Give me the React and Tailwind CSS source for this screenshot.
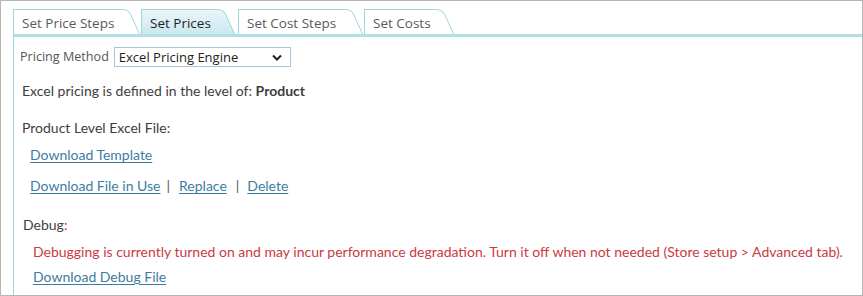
import React from "react";

const TEAL = "#9fd4de";
const UI_FONT = '"Open Sans", "Noto Sans", sans-serif';

function Wing({ active }) {
  return (
    <svg width="20" height="25" viewBox="0 0 20 25" className="block shrink-0">
      {active && (
        <defs>
          <linearGradient id="tabg" x1="0" y1="0" x2="0" y2="1">
            <stop offset="0" stopColor="#e9f6f9" />
            <stop offset="1" stopColor="#cbe8f0" />
          </linearGradient>
        </defs>
      )}
      <path
        d="M0 0.5 L2 0.5 Q8 0.5 10.5 5 L19.5 25 L0 25 Z"
        fill={active ? "url(#tabg)" : "#ffffff"}
        stroke="none"
      />
      <path
        d="M0 0.5 L2 0.5 Q8 0.5 10.5 5 L19.5 25"
        fill="none"
        stroke={TEAL}
        strokeWidth="1"
      />
    </svg>
  );
}

function Tab({ label, width, active }) {
  return (
    <div className="flex items-end">
      <div
        className={
          "h-[25px] border-l border-t border-[#9fd4de] flex items-center pl-[8px] pt-[2px] whitespace-nowrap " +
          (active
            ? "bg-gradient-to-b from-[#e9f6f9] to-[#cbe8f0] text-[#1f1f1f]"
            : "bg-white text-[#5a5a5a]")
        }
        style={{ width }}
      >
        {label}
      </div>
      <Wing active={active} />
    </div>
  );
}

function Link({ children }) {
  return (
    <a href="#" className="text-[#3d7ca2] underline underline-offset-[2px] decoration-[#3d7ca2]">
      {children}
    </a>
  );
}

export default function App() {
  return (
    <div className="w-[863px] h-[296px] bg-white border border-[#b5b5b5] flex flex-col">
      {/* tabs */}
      <div
        className="flex items-end pt-[8px] ml-[12px] gap-[1px] text-[13.5px]"
        style={{ fontFamily: UI_FONT }}
      >
        <Tab label="Set Price Steps" width={107} />
        <Tab label="Set Prices" width={74} active />
        <div className="w-[1px]" />
        <Tab label="Set Cost Steps" width={105} />
        <Tab label="Set Costs" width={70} />
      </div>
      {/* content */}
      <div
        className="flex-1 ml-[12px] border-l border-t-[3px] border-l-[#9fd4de] border-t-[#b2e0e7] text-[14px] text-[#3e3e3e] leading-[20px]"
        style={{ fontFamily: 'Lato, "Open Sans", sans-serif' }}
      >
        <div className="pt-[10px] pl-[6px] flex items-center">
          <span
            className="text-[12.6px] text-[#555555] mr-[5px]"
            style={{ fontFamily: UI_FONT }}
          >
            Pricing Method
          </span>
          <div
            className="w-[177px] h-[20px] border border-[#a9c4d6] flex items-center justify-between pl-[4px] pr-[4px] text-[13px] text-[#222222]"
            style={{ fontFamily: UI_FONT }}
          >
            <span>Excel Pricing Engine</span>
            <svg width="10" height="7" viewBox="0 0 10 7" className="mr-[4px]">
              <polyline points="1,1.5 5,5.5 9,1.5" fill="none" stroke="#222" strokeWidth="2" />
            </svg>
          </div>
        </div>

        <div className="mt-[14px] pl-[8px]">
          Excel pricing is defined in the level of: <b className="font-bold">Product</b>
        </div>

        <div className="mt-[17px] pl-[8px]">Product Level Excel File:</div>

        <div className="mt-[7px] pl-[16px]">
          <Link>Download Template</Link>
        </div>

        <div className="mt-[11px] pl-[16px] flex items-center">
          <Link>Download File in Use</Link>
          <span className="ml-[6px] mr-[9px] text-[#555555]">|</span>
          <Link>Replace</Link>
          <span className="ml-[9px] mr-[8px] text-[#555555]">|</span>
          <Link>Delete</Link>
        </div>

        <div className="mt-[19px] pl-[9px]">
          Debug<span className="text-[#c93a42]">:</span>
        </div>

        <div className="mt-[7px] pl-[19px] text-[#c93a42] whitespace-nowrap">
          Debugging is currently turned on and may incur performance degradation. Turn it off when not needed (Store setup &gt; Advanced tab).
        </div>

        <div className="mt-[5px] pl-[19px]">
          <Link>Download Debug File</Link>
        </div>
      </div>
    </div>
  );
}
